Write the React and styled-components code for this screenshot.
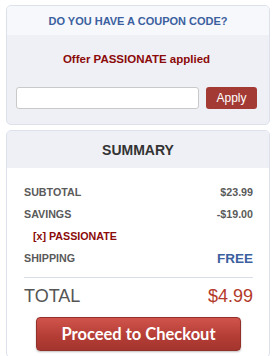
import React from 'react'
import styled, { createGlobalStyle } from 'styled-components'

const GlobalStyle = createGlobalStyle`
body{
    margin:0;
    background:#fff;
    font-family:"Liberation Sans", Arial, sans-serif;
}
`

const Page = styled.div`
padding:5px 5px 0 6px;
display:flex;
flex-direction:column;
gap:5px;
`

const Card = styled.div`
border:1px solid #dde1ec;
border-radius:5px;
overflow:hidden;
background:${p => p.$bg || '#fff'};
`

const CardHead = styled.div`
height:${p => p.$h}px;
display:flex;
align-items:center;
justify-content:center;
background:${p => p.$bg};
color:${p => p.$color};
font-weight:bold;
font-size:${p => p.$size}px;
`

const CouponBody = styled.div`
padding:17px 12px 15px 9px;
display:flex;
flex-direction:column;
`

const Offer = styled.div`
text-align:center;
color:#8b0a0a;
font-weight:bold;
font-size:11.5px;
line-height:14px;
margin-bottom:21px;
`

const InputRow = styled.div`
display:flex;
gap:7px;
`

const Input = styled.input`
flex:1;
height:22px;
box-sizing:border-box;
border:1px solid #c9c9c9;
border-radius:3px;
background:#fff;
`

const ApplyButton = styled.button`
width:52px;
height:22px;
border:none;
border-radius:3px;
background:#a33a34;
color:#fff;
font-family:"Liberation Sans", Arial, sans-serif;
font-size:12px;
padding:0;
`

const SummaryBody = styled.div`
padding:13px 16px 6px 17px;
`

const Row = styled.div`
display:flex;
justify-content:space-between;
align-items:center;
height:22px;
font-weight:bold;
font-size:10.7px;
color:#5a5a5a;
`

const Promo = styled.div`
height:22px;
line-height:22px;
padding-left:9px;
color:#8b0a0a;
font-weight:bold;
font-size:10.7px;
`

const Free = styled.span`
color:#3b60a0;
font-size:13.5px;
`

const Divider = styled.div`
height:1px;
background:#d8dde8;
margin:8px 0 6px;
`

const TotalRow = styled.div`
display:flex;
justify-content:space-between;
align-items:center;
height:24px;
font-size:18px;
color:#555;
`

const TotalValue = styled.span`
color:#b33a2a;
`

const Checkout = styled.button`
display:block;
margin:9px auto 0;
width:205px;
height:34px;
border:1px solid #93302a;
border-radius:4px;
background:linear-gradient(#d0544c, #b53e36 55%, #a3352e);
box-shadow:0 1px 2px rgba(0,0,0,0.25);
color:#fff;
font-family:Lato, "Open Sans", sans-serif;
font-weight:bold;
font-size:16.5px;
padding:0;
`

const App = () => {
    return (
        <Page>
            <GlobalStyle />
            <Card $bg="#eff0f5">
                <CardHead $h={29} $bg="#f7f8fb" $color="#3b60a0" $size={11}>DO YOU HAVE A COUPON CODE?</CardHead>
                <CouponBody>
                    <Offer>Offer PASSIONATE applied</Offer>
                    <InputRow>
                        <Input type="text" />
                        <ApplyButton>Apply</ApplyButton>
                    </InputRow>
                </CouponBody>
            </Card>
            <Card>
                <CardHead $h={37} $bg="#eff0f5" $color="#333" $size={14}>SUMMARY</CardHead>
                <SummaryBody>
                    <Row><span>SUBTOTAL</span><span>$23.99</span></Row>
                    <Row><span>SAVINGS</span><span>-$19.00</span></Row>
                    <Promo>[x] PASSIONATE</Promo>
                    <Row><span>SHIPPING</span><Free>FREE</Free></Row>
                    <Divider />
                    <TotalRow><span>TOTAL</span><TotalValue>$4.99</TotalValue></TotalRow>
                    <Checkout>Proceed to Checkout</Checkout>
                </SummaryBody>
            </Card>
        </Page>
    )
}

export default App
